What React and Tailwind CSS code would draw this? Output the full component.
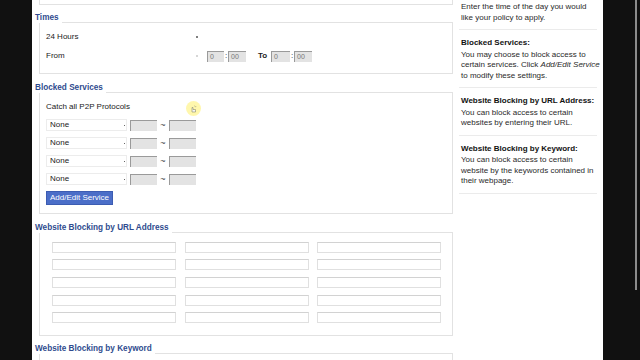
import React from 'react';

const font = "font-['Liberation_Sans',Arial,sans-serif]";

const SectionTitle = ({ children, className = '' }) => (
    <div className={`flex items-end h-[10px] ${className}`}>
        <span className="text-[8.2px] leading-[10px] font-bold text-[#2f4b8e] whitespace-nowrap bg-white">
            {children}
        </span>
        <div className="flex-1 h-px bg-[#e2e2e2] ml-[3px]" />
    </div>
);

const Box = ({ children, className = '' }) => (
    <div className={`ml-[4px] border-x border-b border-[#e2e2e2] ${className}`}>{children}</div>
);

const GreyInput = ({ w, value }) => (
    <div
        className={`${w} h-[11px] bg-[#e3e3e3] border-t border-l border-t-[#9a9a9a] border-l-[#9a9a9a] text-[7px] leading-[10px] text-[#777] pl-[2px]`}
    >
        {value}
    </div>
);

const ServiceRow = () => (
    <div className="flex items-center h-[12px]">
        <div className="w-[81px] h-[12px] border border-[#ececec] flex items-center justify-between pl-[3px] pr-[1px]">
            <span className="text-[8px] text-[#222]">None</span>
            <span className="w-[1px] h-[1px] bg-[#666]" />
        </div>
        <div className="ml-[3px]">
            <GreyInput w="w-[27px]" />
        </div>
        <span className="w-[12px] text-center text-[9px] leading-[10px] text-[#444]">~</span>
        <GreyInput w="w-[27px]" />
    </div>
);

const HelpItem = ({ title, children }) => (
    <div className="pt-[7px] pb-[6px] border-b border-[#ebebeb]">
        <div className="pl-[2px] text-[8px] leading-[11px] font-bold text-[#111] whitespace-nowrap">{title}</div>
        <div className="pl-[2px] mt-[1.5px] text-[8px] leading-[10.5px] text-[#2a2a2a] whitespace-nowrap">
            {children}
        </div>
    </div>
);

const App = () => {
    const urlCells = Array.from({ length: 15 });

    return (
        <div className={`flex w-[640px] h-[360px] overflow-hidden bg-[#111111] ${font}`}>
            {/* left dark margin */}
            <div className="w-[32px] shrink-0" />

            {/* page */}
            <div className="w-[571px] shrink-0 bg-white flex">
                {/* form column */}
                <div className="w-[421px] shrink-0 pl-[3px]">
                    <Box className="h-[5px]" />

                    <SectionTitle className="mt-[8px]">Times</SectionTitle>
                    <Box className="h-[51px] pt-[8px] pl-[6px] flex flex-col gap-[7px]">
                        <div className="flex items-center h-[12px] text-[8px] text-[#222]">
                            <span className="w-[150px]">24 Hours</span>
                            <span className="w-[2px] h-[2px] rounded-full bg-[#555]" />
                        </div>
                        <div className="flex items-center h-[12px] text-[8px] text-[#222]">
                            <span className="w-[150px]">From</span>
                            <span className="w-[2px] h-[2px] rounded-full bg-[#c8c8c8]" />
                            <div className="ml-[9px] flex items-center">
                                <GreyInput w="w-[17px]" value="0" />
                                <span className="w-[4px] text-center text-[8px]">:</span>
                                <GreyInput w="w-[18px]" value="00" />
                                <span className="ml-[12px] w-[13px] font-bold text-[8px] text-[#222]">To</span>
                                <GreyInput w="w-[19px]" value="0" />
                                <span className="w-[4px] text-center text-[8px]">:</span>
                                <GreyInput w="w-[18px]" value="00" />
                            </div>
                        </div>
                    </Box>

                    <SectionTitle className="mt-[9px]">Blocked Services</SectionTitle>
                    <Box className="relative h-[121px] pt-[8px] pl-[6px] flex flex-col gap-[6px]">
                        <div className="h-[12px] flex items-center text-[8px] text-[#222]">Catch all P2P Protocols</div>
                        <ServiceRow />
                        <ServiceRow />
                        <ServiceRow />
                        <ServiceRow />
                        <button className="w-[67px] h-[14px] bg-[#4b6ec8] border border-[#3c5cb2] text-white text-[8px] leading-[12px]">
                            Add/Edit Service
                        </button>
                        {/* cursor highlight */}
                        <div className="absolute left-[146px] top-[8px] w-[15px] h-[15px] rounded-full bg-[#fff38a]/70 flex items-center justify-center">
                            <svg width="7" height="8" viewBox="0 0 7 8">
                                <path d="M2 7 L2 2.5 L3 2.5 L3 4.5 L5.5 4.5 L5.5 7 Z" fill="#f6f6f6" stroke="#8a8a6a" strokeWidth="0.6" />
                                <path d="M4.5 0.5 L5 1.8 L6.3 1.5" fill="none" stroke="#9a9a7a" strokeWidth="0.5" />
                            </svg>
                        </div>
                    </Box>

                    <SectionTitle className="mt-[9px]">Website Blocking by URL Address</SectionTitle>
                    <Box className="h-[103px] pt-[8.5px] pl-[12px]">
                        <div className="grid grid-cols-[124px_124px_124px] gap-x-[8.5px] gap-y-[6.7px]">
                            {urlCells.map((_, i) => (
                                <div key={i} className="h-[11px] border border-[#e0e0e0] border-t-[#d2d2d2] bg-white" />
                            ))}
                        </div>
                    </Box>

                    <SectionTitle className="mt-[8px]">Website Blocking by Keyword</SectionTitle>
                    <Box className="h-[40px]" />
                </div>

                {/* help column */}
                <div className="w-[148px] shrink-0 ml-[2px] pl-[4px] pr-[6px]">
                    <div className="pt-[2px] pb-[6px] border-b border-[#ebebeb] pl-[2px] text-[8px] leading-[10.5px] text-[#2a2a2a] whitespace-nowrap">
                        Enter the time of the day you would
                        <br />
                        like your policy to apply.
                    </div>
                    <HelpItem title="Blocked Services:">
                        You may choose to block access to
                        <br />
                        certain services. Click <i>Add/Edit Service</i>
                        <br />
                        to modify these settings.
                    </HelpItem>
                    <HelpItem title="Website Blocking by URL Address:">
                        You can block access to certain
                        <br />
                        websites by entering their URL.
                    </HelpItem>
                    <HelpItem title="Website Blocking by Keyword:">
                        You can block access to certain
                        <br />
                        website by the keywords contained in
                        <br />
                        their webpage.
                    </HelpItem>
                </div>
            </div>

            {/* right dark margin with scrollbar */}
            <div className="w-[32px] shrink-0" />
            <div className="w-[5px] shrink-0 flex justify-start">
                <div className="w-[2px] h-[290px] bg-[#8c8c8c]" />
            </div>
        </div>
    );
};

export default App;
